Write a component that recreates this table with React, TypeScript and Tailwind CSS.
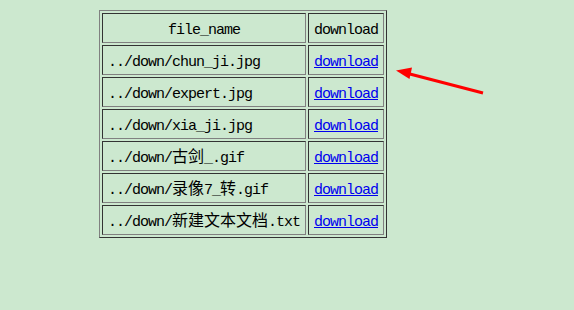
const files = [
  ['../down/chun_ji.jpg'],
  ['../down/expert.jpg'],
  ['../down/xia_ji.jpg'],
  ['../down/', '古剑', '_.gif'],
  ['../down/', '录像', '7_', '转', '.gif'],
  ['../down/', '新建文本文档', '.txt'],
];

const cjk = /[\u4e00-\u9fff]/;

function FileName({ parts }: { parts: string[] }) {
  return (
    <>
      {parts.map((p, i) =>
        cjk.test(p) ? (
          <span key={i} className="text-[16px] tracking-normal">{p}</span>
        ) : (
          <span key={i}>{p}</span>
        )
      )}
    </>
  );
}

const cell =
  'h-[30px] p-0 pt-[4px] align-middle border border-t-[#333333] border-l-[#333333] border-r-[#808080] border-b-[#808080]';

export default function App() {
  return (
    <div
      className="relative min-h-[310px] w-[574px] bg-[#cce8cf] pt-[10px] pl-[99px] text-[15px] tracking-[-1px] text-black leading-none"
      style={{ fontFamily: '"Liberation Mono", "Noto Sans CJK SC", monospace' }}
    >
      <table className="border-separate border-spacing-[2px] border border-t-[#808080] border-l-[#808080] border-r-[#333333] border-b-[#333333]">
        <thead>
          <tr>
            <th className={`${cell} w-[204px] text-center font-normal`}>file_name</th>
            <th className={`${cell} w-[76px] text-center font-normal`}>download</th>
          </tr>
        </thead>
        <tbody>
          {files.map((f, i) => (
            <tr key={i}>
              <td className={`${cell} pl-[5px] text-left`}>
                <FileName parts={f} />
              </td>
              <td className={`${cell} pl-[5px] text-left`}>
                <a href="#" className="text-[#0000ee] underline">download</a>
              </td>
            </tr>
          ))}
        </tbody>
      </table>

      <svg className="absolute left-0 top-0" width="574" height="310">
        <line x1="483" y1="93" x2="406" y2="73" stroke="#ff0000" strokeWidth="3" />
        <polygon points="396,70.5 412,67.5 409.5,79" fill="#ff0000" />
      </svg>
    </div>
  );
}
